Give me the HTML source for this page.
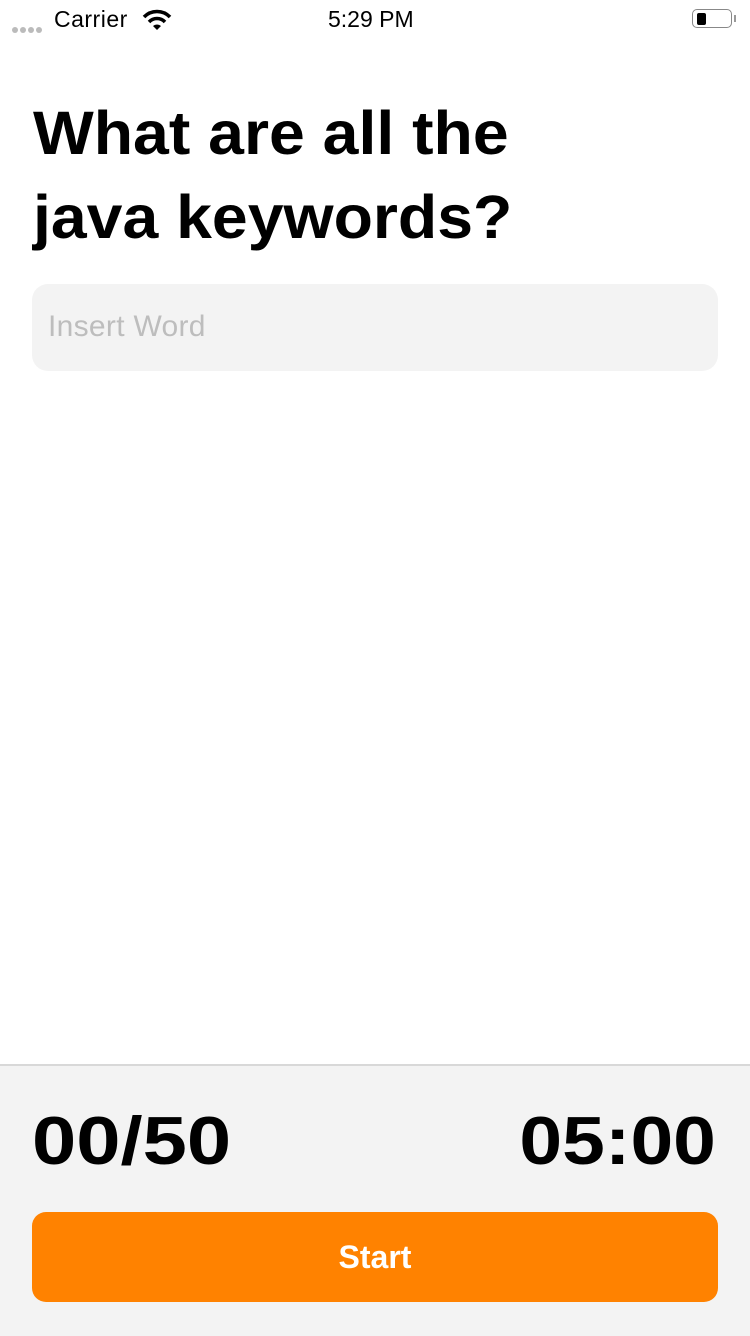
<!DOCTYPE html>
<html><head><meta charset="utf-8"><style>
body{margin:0;width:750px;height:1334px;background:#fff;font-family:"Liberation Sans",sans-serif;position:relative;overflow:hidden}
.a{position:absolute}
</style></head><body>
<div class="a" style="left:12px;top:20px">
<span style="display:inline-block;width:6px;height:6px;border-radius:3px;background:#bbb;margin-right:2px"></span><span style="display:inline-block;width:6px;height:6px;border-radius:3px;background:#bbb;margin-right:2px"></span><span style="display:inline-block;width:6px;height:6px;border-radius:3px;background:#bbb;margin-right:2px"></span><span style="display:inline-block;width:6px;height:6px;border-radius:3px;background:#bbb"></span></div>
<div class="a" style="left:54px;top:6px;font-size:23px;letter-spacing:0.5px">Carrier</div>
<svg class="a" style="left:142px;top:9px" width="30" height="22" viewBox="0 0 30 22"><path d="M2 8 A18 18 0 0 1 28 8" stroke="#000" stroke-width="3.5" fill="none"/><path d="M7 13 A11 11 0 0 1 23 13" stroke="#000" stroke-width="3.5" fill="none"/><path d="M11 17 L15 21 L19 17 A6 6 0 0 0 11 17Z" fill="#000"/></svg>
<div class="a" style="left:328px;top:6px;font-size:23px">5:29 PM</div>
<div class="a" style="left:692px;top:9px;width:40px;height:19px;border:1.5px solid #888;border-radius:5px;box-sizing:border-box"></div>
<div class="a" style="left:697px;top:13px;width:9px;height:12px;background:#000;border-radius:2px"></div>
<div class="a" style="left:734px;top:15px;width:2px;height:7px;background:#999"></div>
<div class="a" style="left:33px;top:91px;font-size:61px;font-weight:bold;line-height:84px;transform:scaleX(1.055);transform-origin:0 0;white-space:nowrap">What are all the<br>java keywords?</div>
<div class="a" style="left:32px;top:284px;width:686px;height:87px;background:#f3f3f3;border-radius:16px"></div>
<div class="a" style="left:48px;top:310px;font-size:30px;color:#bdbdbd;letter-spacing:0.3px">Insert Word</div>
<div class="a" style="left:0;top:1064px;width:750px;height:270px;background:#f3f3f3;border-top:2px solid #d8d8d8"></div>
<div class="a" style="left:32px;top:1102px;font-size:68px;font-weight:bold;transform:scaleX(1.17);transform-origin:0 0">00/50</div>
<div class="a" style="right:34px;top:1102px;font-size:68px;font-weight:bold;transform:scaleX(1.13);transform-origin:100% 0">05:00</div>
<div class="a" style="left:32px;top:1212px;width:686px;height:90px;background:#ff8200;border-radius:14px;color:#fff;font-size:32px;font-weight:bold;text-align:center;line-height:90px">Start</div>
</body></html>
